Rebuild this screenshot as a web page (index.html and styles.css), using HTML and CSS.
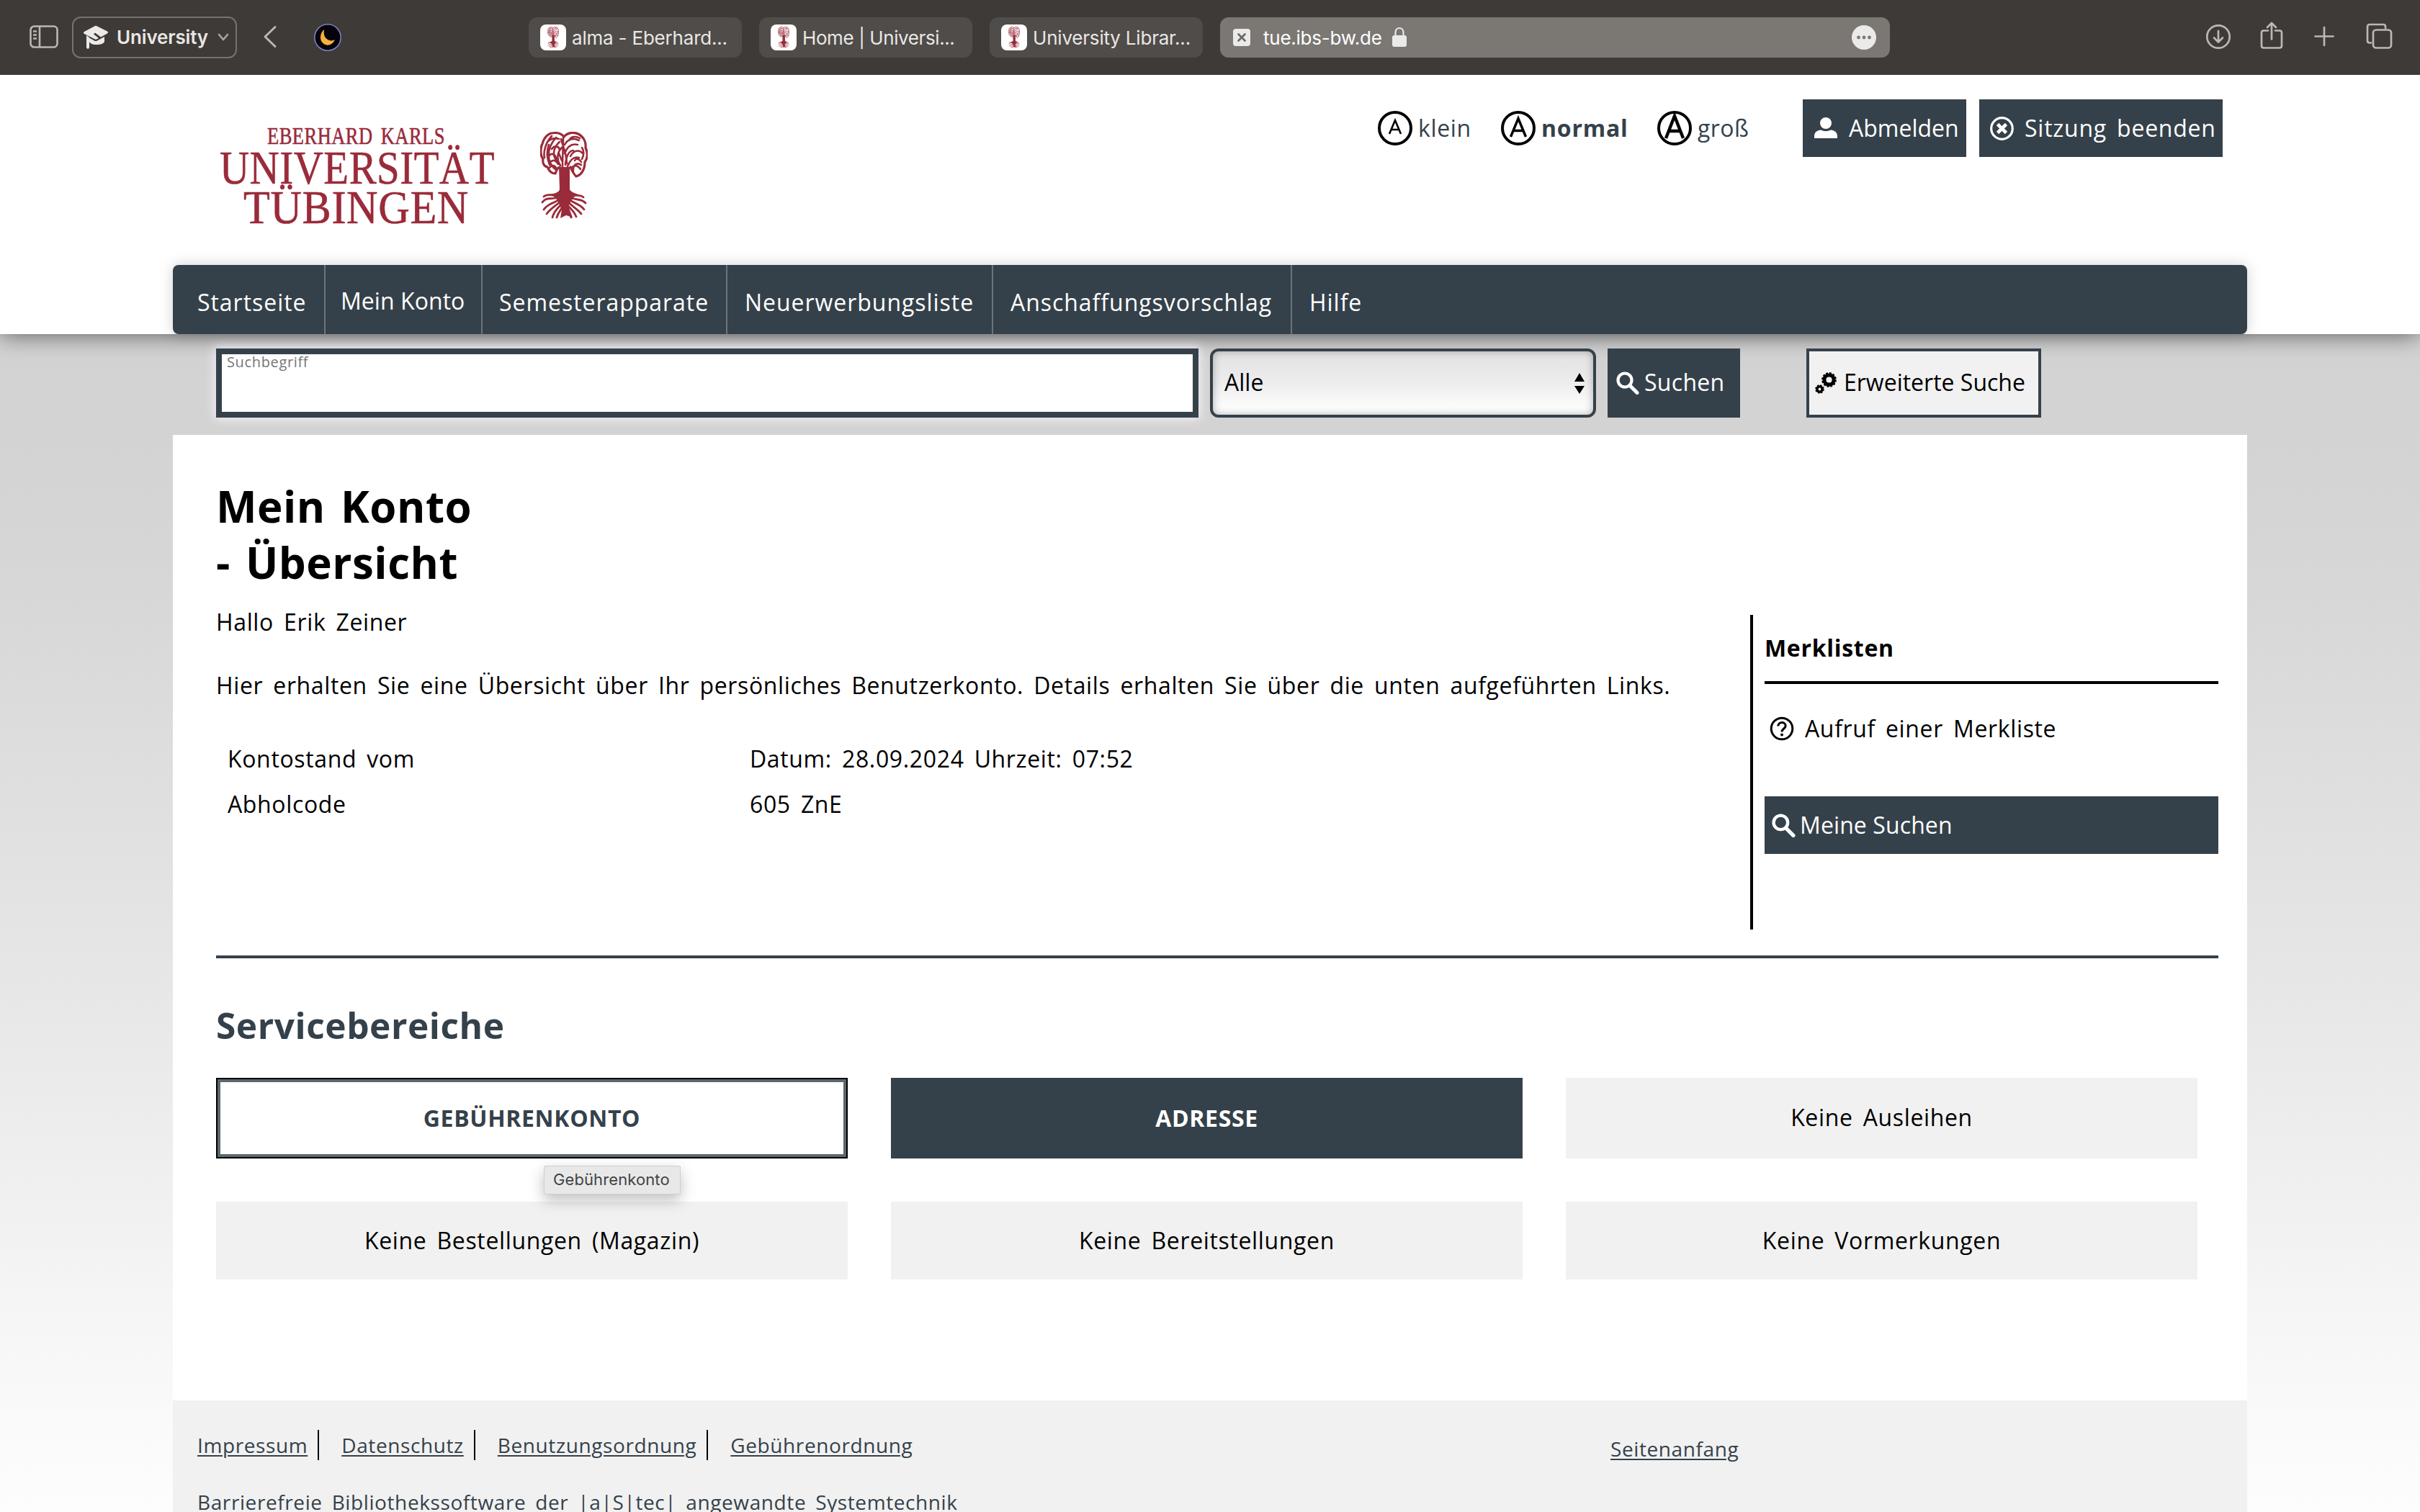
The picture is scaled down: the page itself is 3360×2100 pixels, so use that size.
FILE: index.html
```
<!DOCTYPE html>
<html lang="de">
<head>
<meta charset="utf-8">
<title>Mein Konto - Übersicht</title>
<link rel="stylesheet" href="styles.css">
</head>
<body>
<svg class="defs" width="0" height="0" aria-hidden="true">
  <symbol id="tree" viewBox="0 0 66 122">
    <g fill="none" stroke="#9a2b3a" stroke-linecap="round">
      <path stroke-width="3.2" d="M29 51C25 46 22 55 21 58C16 58 12 54 10 49C5 48 3 43 4 38C0 33 0 22 3 17C5 8 11 2 18 1.600C24 1 30 3 33 7C38 1 46 0 53 3C60 7 64 14 63 22C66 29 66 37 62 42C62 53 57 60 50 62C46 58 44 54 42 49"/>
      <path stroke-width="2.6" d="M31 50C31 34 32 20 32 8M28 47C22 38 24 28 30 22M26 44C17 36 16 24 27 14M21 52C9 42 8 24 22 8M13 46C10 38 8 30 12 18M6 36C4 28 8 14 16 6M35 46C36 34 40 26 46 26M38 48C42 38 48 34 54 36M34 30C38 20 44 16 52 18M34 18C38 10 46 8 54 12M46 56C45 46 50 42 57 46M58 22C62 28 60 34 58 38M43 50C48 46 52 46 56 52M16 24C20 18 26 20 27 25M12 34C16 28 22 32 22 38M42 34C46 26 54 24 59 30M40 12C43 6 50 6 55 9M10 14C14 10 20 8 26 10M14 42C18 38 22 40 25 45M29 10C31 20 36 26 37 44M22 50C20 46 16 46 13 50M48 40C50 36 55 38 57 42M26 30L30 40"/>
      <path stroke-width="2.8" d="M28 85C20 92 12 84 5 90M27 89C18 97 10 88 3 98M28 93C18 101 12 98 5 108M28 97C20 104 15 106 9 114M29 101C24 107 19 110 17 119M31 104C28 110 25 112 23 119M38 85C46 92 54 85 60 91M39 89C48 97 56 91 63 99M39 93C48 101 54 99 61 108M38 97C45 104 51 107 57 114M37 101C42 107 47 110 50 118M35 104C38 110 41 112 43 119"/>
    </g>
    <path fill="#9a2b3a" d="M26 49H41V80C42 83 47 85 53 87C45 90 43 97 39 103L45 119L36 116L28 120L30 108C26 100 24 91 13 87C20 86 26 84 27 80Z"/>
  </symbol>
  <symbol id="lens" viewBox="0 0 32 32">
    <circle cx="12" cy="12" r="9.5" fill="none" stroke="currentColor" stroke-width="4.2"/>
    <path d="M19.5 20L29 29.5" fill="none" stroke="currentColor" stroke-width="5" stroke-linecap="round"/>
  </symbol>
</svg>

<header class="browser">
  <svg class="sidebar-icon" width="40" height="32" viewBox="0 0 40 32" fill="none" stroke="#bab7b5" stroke-width="2.6"><rect x="1.5" y="1.5" width="37" height="29" rx="5"/><path d="M14 2V30M5 8.5H10M5 13.5H10M5 18.5H10"/></svg>
  <div class="profile">
    <svg width="36" height="34" viewBox="0 0 36 34"><path fill="#eceae8" d="M17 1Q18 .5 19 1L34 8.500Q36 10 34 11.500L25 16.500L17 10.500L15 12.500L22 18L19 19.500Q18 20 17 19.500L2 12Q0 10.500 2 9Z"/><path fill="#eceae8" d="M8 17L16 21.500Q18 22.500 20 21.500L30 16V23C28 27 22 27 18 27C13 27 10 25 8 22ZM5 14L9 17V31Q7 35 5 31Z"/></svg>
    <span>University</span>
    <svg width="16" height="12" viewBox="0 0 16 12" fill="none" stroke="#aaa7a5" stroke-width="2.6" stroke-linecap="round" stroke-linejoin="round"><path d="M2 2L8 9L14 2"/></svg>
  </div>
  <svg class="back" width="20" height="32" viewBox="0 0 20 32" fill="none" stroke="#bab7b5" stroke-width="3" stroke-linecap="round" stroke-linejoin="round"><path d="M17 2.500L3 16L17 29.500"/></svg>
  <svg class="moon" width="40" height="40" viewBox="0 0 40 40"><circle cx="20" cy="20" r="18.200" fill="#05030a" stroke="#7b80c8" stroke-width="1.600"/><path fill="#f7b03c" d="M15 9C9 14 8 24 14 28.500C20 33 27 30 30 23C25 26 19 24 16 19C14.500 16 14.500 12 15 9Z"/></svg>
  <nav class="tabs">
    <div class="tab"><span class="fav"><svg width="16" height="30"><use href="#tree"/></svg></span><span class="title">alma - Eberhard...</span></div>
    <div class="tab"><span class="fav"><svg width="16" height="30"><use href="#tree"/></svg></span><span class="title tight">Home | Universi...</span></div>
    <div class="tab"><span class="fav"><svg width="16" height="30"><use href="#tree"/></svg></span><span class="title">University Librar...</span></div>
    <div class="address">
      <svg width="24" height="24" viewBox="0 0 24 24"><rect width="24" height="24" rx="4" fill="#ebeae8"/><path d="M7.500 7.500L16.500 16.500M16.500 7.500L7.500 16.500" stroke="#6d6966" stroke-width="2.800" stroke-linecap="round"/></svg>
      <span class="url">tue.ibs-bw.de</span>
      <svg class="lock" width="20" height="28" viewBox="0 0 20 28"><path d="M4.500 13V8C4.500 0 15.500 0 15.500 8V13" fill="none" stroke="#ebeae8" stroke-width="2.200"/><rect y="12" width="20" height="16" rx="3" fill="#ebeae8"/></svg>
      <svg class="more" width="34" height="34" viewBox="0 0 34 34"><circle cx="17" cy="17" r="17" fill="#ebeae8"/><g fill="#7b7774"><circle cx="9.500" cy="17" r="2.400"/><circle cx="17" cy="17" r="2.400"/><circle cx="24.500" cy="17" r="2.400"/></g></svg>
    </div>
  </nav>
  <svg class="tools" width="260" height="40" viewBox="0 0 260 40" fill="none" stroke="#bab7b5" stroke-width="2.700" stroke-linecap="round" stroke-linejoin="round">
    <circle cx="18" cy="21" r="15.700"/><path d="M18 13V28M12 22.500L18 28.500L24 22.500"/>
    <path d="M87 12.500H81Q78 12.500 78 15.500V33.500Q78 36.500 81 36.500H103Q106 36.500 106 33.500V15.500Q106 12.500 103 12.500H97M92 24.500V3M86 8L92 2L98 8"/>
    <path d="M165 8V33M152.500 20.500H177.500"/>
    <rect x="233" y="11.500" width="25" height="25" rx="4"/><path d="M230 29.500H228Q225 29.500 225 26.500V7.500Q225 4 228 4H247Q250 4 250 7V9"/>
  </svg>
</header>

<div class="site-header">
  <div class="brand-row">
    <svg class="logo" width="524" height="170" viewBox="0 0 524 170">
      <g fill="#9a2b3a" stroke="#9a2b3a" stroke-width=".6" font-family="'Liberation Serif', serif">
        <text x="71" y="35" font-size="34" textLength="247" lengthAdjust="spacingAndGlyphs">EBERHARD KARLS</text>
        <text x="5" y="90" font-size="65" textLength="382" lengthAdjust="spacingAndGlyphs">UNIVERSITÄT</text>
        <text x="38" y="145" font-size="65" textLength="313" lengthAdjust="spacingAndGlyphs">TÜBINGEN</text>
      </g>
      <use href="#tree" x="450" y="18" width="66" height="122"/>
    </svg>
    <div class="sizes">
      <a class="size"><svg width="48" height="48" viewBox="0 0 48 48"><circle cx="24" cy="24" r="22" fill="none" stroke="#000" stroke-width="4"/><path d="M16 32L24 13L32 32M19 26H29" fill="none" stroke="#000" stroke-width="2.600"/></svg><span>klein</span></a>
      <a class="size current"><svg width="48" height="48" viewBox="0 0 48 48"><circle cx="24" cy="24" r="22" fill="none" stroke="#000" stroke-width="4"/><path d="M13.500 36L24 10.500L34.500 36M17.500 27.500H30.500" fill="none" stroke="#000" stroke-width="3.400"/></svg><span>normal</span></a>
      <a class="size"><svg width="48" height="48" viewBox="0 0 48 48"><circle cx="24" cy="24" r="22" fill="none" stroke="#000" stroke-width="4"/><path d="M12 38L24 7L36 38M16.500 28H31.500" fill="none" stroke="#000" stroke-width="4.400"/></svg><span class="plain">groß</span></a>
    </div>
    <a class="btn logout"><svg width="32" height="30" viewBox="0 0 32 30" fill="#fff"><ellipse cx="16" cy="8" rx="8" ry="8"/><path d="M0 29V25C1 19 6 18 9 17.500Q16 21 23 17.500C26 18 31 19 32 25V29Z"/></svg><span>Abmelden</span></a>
    <a class="btn quit"><svg width="33" height="33" viewBox="0 0 33 33" fill="none" stroke="#fff"><circle cx="16.500" cy="16.500" r="14.800" stroke-width="3.200"/><path d="M10.500 10.500L22.500 22.500M22.500 10.500L10.500 22.500" stroke-width="4.600"/></svg><span>Sitzung beenden</span></a>
  </div>
  <nav class="mainnav">
    <a class="n1">Startseite</a><a class="n2">Mein Konto</a><a class="n3">Semesterapparate</a><a class="n4">Neuerwerbungsliste</a><a class="n5">Anschaffungsvorschlag</a><a class="n6">Hilfe</a>
  </nav>
</div>

<form class="search">
  <div class="term"><label>Suchbegriff</label></div>
  <div class="select"><span>Alle</span><svg width="14" height="30" viewBox="0 0 14 30"><path d="M7 0L14 12H0ZM7 29L14 18H0Z"/></svg></div>
  <div class="submit"><svg width="32" height="32"><use href="#lens"/></svg><span>Suchen</span></div>
  <div class="advanced"><svg width="30" height="30" viewBox="0 0 30 30" fill="none" stroke="#000"><circle cx="19.500" cy="10.500" r="6.600" stroke-width="5"/><circle cx="19.500" cy="10.500" r="9.200" stroke-width="2.400" stroke-dasharray="3 1.820"/><circle cx="6.500" cy="23.500" r="3.600" stroke-width="3.400"/><circle cx="6.500" cy="23.500" r="5.300" stroke-width="2" stroke-dasharray="2.400 1.760"/></svg><span>Erweiterte Suche</span></div>
</form>

<main class="page">
  <section class="overview">
    <div class="account">
      <h1>Mein Konto<br>- Übersicht</h1>
      <p class="hello">Hallo Erik Zeiner</p>
      <p class="intro">Hier erhalten Sie eine Übersicht über Ihr persönliches Benutzerkonto. Details erhalten Sie über die unten aufgeführten Links.</p>
      <dl>
        <dt>Kontostand vom</dt><dd>Datum: 28.09.2024 Uhrzeit: 07:52</dd>
        <dt>Abholcode</dt><dd>605 ZnE</dd>
      </dl>
    </div>
    <aside>
      <h3>Merklisten</h3>
      <a class="help"><svg width="34" height="34" viewBox="0 0 34 34" fill="none" stroke="#000"><circle cx="17" cy="17" r="14.800" stroke-width="3"/><path d="M11.800 13.500C12 7 22 7 22.200 13C22.200 17 17 17 17 21.500" stroke-width="3"/><circle cx="17" cy="25.500" r="1" stroke-width="2"/></svg><span>Aufruf einer Merkliste</span></a>
      <a class="searches"><svg width="33" height="33"><use href="#lens"/></svg><span>Meine Suchen</span></a>
    </aside>
  </section>
  <hr>
  <h2>Servicebereiche</h2>
  <div class="services">
    <a class="tile focus">GEBÜHRENKONTO<span class="tip">Gebührenkonto</span></a>
    <a class="tile dark">ADRESSE</a>
    <div class="tile empty">Keine Ausleihen</div>
    <div class="tile">Keine Bestellungen (Magazin)</div>
    <div class="tile">Keine Bereitstellungen</div>
    <div class="tile">Keine Vormerkungen</div>
  </div>
  <footer>
    <div class="legal">
      <div class="links"><span><a>Impressum</a></span><span><a>Datenschutz</a></span><span><a>Benutzungsordnung</a></span><span><a>Gebührenordnung</a></span></div>
      <a class="vendor">Barrierefreie Bibliothekssoftware der |a|S|tec| angewandte Systemtechnik</a>
    </div>
    <a class="totop">Seitenanfang</a>
  </footer>
</main>
</body>
</html>
```
FILE: styles.css
```
* { box-sizing: border-box; }
html { height: 2100px; overflow: hidden; }
body {
  margin: 0;
  height: 2100px;
  overflow: hidden;
  display: flex;
  flex-direction: column;
  font: 32px/44px "Open Sans", sans-serif;
  letter-spacing: .64px;
  word-spacing: 5.12px;
  color: #000;
  background: linear-gradient(#d3d3d3 600px, #d7d7d7 820px, #e7e7e7 1380px, #f8f8f8 1900px, #fdfdfd 2100px);
}
h1, h2, h3, p, dl, dd { margin: 0; }
svg { display: block; flex: none; }
.defs { position: absolute; }

.browser {
  flex: none;
  height: 104px;
  display: flex;
  align-items: center;
  background: #3e3a37;
  color: #e9e7e5;
  font: 26px/32px Inter, sans-serif;
  letter-spacing: -.2px;
  word-spacing: 0;
  white-space: nowrap;
}
.sidebar-icon { margin: 0 19px 2px 41px; }
.profile {
  width: 229px;
  height: 58px;
  display: flex;
  align-items: center;
  padding-left: 13px;
  border: 2px solid #75726f;
  border-radius: 12px;
  font-weight: 600;
  letter-spacing: -.15px;
}
.profile span { margin: 0 12px 0 11px; }
.profile span + svg { margin-left: 1px; }
.back { margin: 0 50px 2px 36px; }
.tabs { display: flex; gap: 24px; margin-left: 259px; }
.tab, .address {
  height: 56px;
  display: flex;
  align-items: center;
  border-radius: 12px;
}
.tab { width: 296px; padding-left: 16px; gap: 8px; background: #504c49; }
.title, .url { padding-top: 2px; }
.tight { letter-spacing: -.4px; }
.fav {
  width: 36px;
  height: 36px;
  display: grid;
  place-items: center;
  border-radius: 8px;
  background: #fff;
}
.address { width: 930px; padding: 0 19px 0 18px; background: #7b7773; color: #fff; }
.url { margin: 0 14px 0 18px; letter-spacing: -.25px; }
.lock { margin-bottom: 2px; }
.more { margin-left: auto; }
.tools { margin-left: 438px; margin-bottom: 4px; }

.site-header {
  flex: none;
  position: relative;
  height: 360px;
  padding: 0 240px;
  background: #fff;
  box-shadow: 0 0 32px rgba(0, 0, 0, .6);
  clip-path: inset(0 0 -60px 0);
}
.brand-row { display: flex; height: 264px; padding: 34px 34px 0 60px; align-items: flex-start; }
.logo { margin-top: 27px; }
.sizes { display: flex; margin: 16px 76px 0 auto; }
.size { display: flex; align-items: center; height: 48px; color: #35414a; }
.size span { margin-left: 8px; line-height: 48px; }
.size:nth-child(1) { width: 171px; }
.size:nth-child(2) { width: 217px; }
.size:nth-child(3) { width: 126px; }
.size .plain { letter-spacing: .4px; }
.current { font-weight: 700; letter-spacing: .8px; }
.btn { display: flex; align-items: center; height: 80px; background: #35414a; color: #fff; }
.logout { width: 227px; padding-left: 16px; gap: 16px; letter-spacing: 0; margin-right: 18px; }
.quit { width: 338px; padding-left: 15px; gap: 15px; letter-spacing: .75px; }
.mainnav {
  display: flex;
  height: 96px;
  border-radius: 8px;
  background: #35414a;
  color: #fff;
  letter-spacing: .96px;
  box-shadow: 0 0 20px rgba(0, 0, 0, .18);
}
.mainnav a { line-height: 96px; padding-top: 4px; border-right: 2px solid #6a757b; }
.n1 { width: 212px; padding-left: 34px; }
.n2 { width: 218px; padding-left: 21px; letter-spacing: .05px; word-spacing: 0; }
.mainnav .n2 { padding-top: 2px; }
.n3 { width: 340px; padding-left: 23px; }
.n4 { width: 369px; padding-left: 24px; }
.n5 { width: 415px; padding-left: 24px; }
.n6 { padding-left: 24px; }
.mainnav .n6 { border: 0; }

.search { flex: none; display: flex; height: 140px; padding: 20px 0 0 300px; letter-spacing: 0; word-spacing: 0; position: relative; }
.search > div { height: 96px; }
.term {
  width: 1364px;
  border: 8px solid #35414a;
  background: #fff;
  box-shadow: 0 0 14px 2px rgba(250, 246, 255, .8);
  padding: 1px 7px;
}
.term label { display: block; font-size: 20px; line-height: 20px; letter-spacing: .64px; color: #767676; }
.select, .submit, .advanced { display: flex; align-items: center; padding-bottom: 3px; }
.select {
  width: 536px;
  margin-left: 16px;
  border: 4px solid #35414a;
  border-radius: 12px;
  justify-content: space-between;
  padding-left: 16px;
  padding-right: 12px;
  background: linear-gradient(#e6e6e6 20%, #ededed 50%, #fff 95%);
  box-shadow: inset 0 0 12px rgba(0, 0, 0, .3);
}
.select svg { margin-top: 4px; }
.submit { width: 184px; margin-left: 16px; padding-left: 12px; gap: 7px; background: #35414a; color: #fff; letter-spacing: .3px; }
.submit svg { margin-top: 2px; }
.advanced { width: 326px; margin-left: 92px; padding-left: 8px; gap: 10px; border: 4px solid #35414a; background: #f1f1f1; }
.advanced svg { margin-top: 2px; }

.page { flex: 1; display: flex; flex-direction: column; margin: 0 240px; padding: 60px 0 0 60px; background: #fff; }
.overview { display: flex; justify-content: space-between; margin-right: 40px; height: 627px; flex: none; }
h1 { font-size: 60px; line-height: 78px; letter-spacing: .5px; }
.hello { margin-top: 22px; }
.intro { margin-top: 44px; white-space: nowrap; letter-spacing: .63px; }
dl { display: grid; grid-template-columns: 725px 900px; row-gap: 19px; margin: 58px 0 0 16px; }
dl dd { margin: 0; }
aside { width: 650px; margin-top: 190px; padding: 24px 0 0 16px; border-left: 4px solid #000; }
h3 { font-size: 32px; letter-spacing: .7px; padding-bottom: 24px; border-bottom: 4px solid #000; }
.help { display: flex; align-items: center; margin-top: 40px; padding-left: 7px; gap: 15px; }
.searches {
  display: flex;
  align-items: center;
  height: 80px;
  margin-top: 72px;
  padding-left: 10px;
  gap: 6px;
  background: #35414a;
  color: #fff;
  letter-spacing: .1px;
  word-spacing: 0;
}
hr { width: 2780px; height: 4px; margin: 36px 0 0; border: 0; background: #35414a; flex: none; }
h2 { margin-top: 63px; font-size: 49.6px; line-height: 60px; letter-spacing: .55px; color: #35414a; }
.services { display: grid; grid-template-columns: repeat(3, 877px); grid-template-rows: 112px 108px; gap: 60px; margin-top: 43px; }
.tile { display: flex; align-items: center; justify-content: center; background: #f1f1f1; }
.empty { padding-bottom: 3px; }
.focus, .dark { font-weight: 700; }
.focus { position: relative; color: #35414a; background: #fff; border: 2px solid #000; box-shadow: inset 0 0 0 4px #5b686e; }
.dark { color: #fff; background: #35414a; }
.tip {
  position: absolute;
  left: 453px;
  top: 120px;
  width: 190px;
  height: 40px;
  padding-left: 12px;
  border: 1px solid #cfcfcf;
  border-radius: 2px;
  background: #e8e8e8;
  box-shadow: 0 8px 20px rgba(0, 0, 0, .25);
  font: 22px/36px Inter, sans-serif;
  letter-spacing: .1px;
  color: #444;
}
footer {
  flex: 1;
  display: flex;
  margin: 168px 0 0 -60px;
  padding: 41px 0 0 34px;
  background: #f1f1f1;
  color: #35414a;
  font-size: 28px;
  line-height: 42px;
  letter-spacing: .6px;
}
footer a { text-decoration: underline; text-decoration-thickness: 2px; text-underline-offset: 3px; white-space: nowrap; }
.legal { width: 1962px; }
.links { display: flex; }
.links span { padding-right: 14px; margin-right: 31px; border-right: 2px solid #000; }
.links span:last-child { border: 0; }
.vendor { display: block; margin-top: 37px; }
.totop { margin-top: 5px; }
```
